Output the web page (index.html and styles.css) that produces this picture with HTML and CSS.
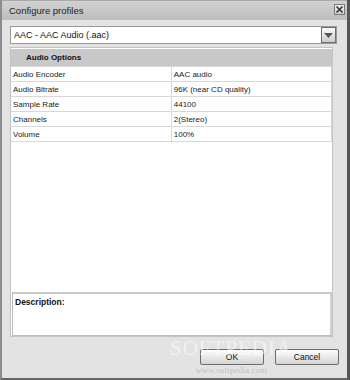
FILE: index.html
```html
<!DOCTYPE html>
<html lang="en">
<head>
  <meta charset="UTF-8">
  <title>Configure profiles</title>
  <link rel="stylesheet" href="styles.css">
</head>
<body>
  <div class="window">
    <div class="titlebar">
      <span class="title">Configure profiles</span>
      <span class="close">
        <svg width="9" height="9" viewBox="0 0 9 9"><path d="M1.5 1.5 L7.5 7.5 M7.5 1.5 L1.5 7.5" stroke="#333" stroke-width="1.6"/></svg>
      </span>
    </div>

    <div class="content">
      <div class="combo">
        <span class="combo-text">AAC - AAC Audio (.aac)</span>
        <span class="combo-btn">
          <svg width="9" height="5" viewBox="0 0 9 5"><path d="M0 0 L9 0 L4.5 5 Z" fill="#555"/></svg>
        </span>
      </div>

      <div class="panel">
        <table class="options">
          <tr class="head"><th colspan="2">Audio Options</th></tr>
          <tr><td>Audio Encoder</td><td>AAC audio</td></tr>
          <tr><td>Audio Bitrate</td><td>96K (near CD quality)</td></tr>
          <tr><td>Sample Rate</td><td>44100</td></tr>
          <tr><td>Channels</td><td>2(Stereo)</td></tr>
          <tr><td>Volume</td><td>100%</td></tr>
        </table>
        <div class="spacer"></div>
        <div class="desc">Description:</div>
      </div>

      <div class="buttons">
        <button class="btn">OK</button>
        <button class="btn">Cancel</button>
      </div>
    </div>

    <div class="watermark">
      <div class="wm-big">SOFTPEDIA</div>
      <div class="wm-small">www.softpedia.com</div>
    </div>
  </div>
</body>
</html>
```

FILE: styles.css
```css
html, body {
  margin: 0;
  padding: 0;
  background: #e3e3e3;
}

body {
  font-family: "Liberation Sans", Arial, sans-serif;
  color: #111;
}

.window {
  position: relative;
  width: 350px;
  height: 380px;
  box-sizing: border-box;
  border-left: 2px solid #8c8c8c;
  border-right: 3px solid #555;
  border-bottom: 2px solid #666;
  background: #e3e3e3;
  display: flex;
  flex-direction: column;
}

.titlebar {
  height: 20px;
  flex: none;
  display: flex;
  align-items: center;
  justify-content: space-between;
  padding: 0 2px 0 7px;
  background: linear-gradient(#d2d2d2, #bdbdbd);
  border-top: 1px solid #aaa;
  box-sizing: border-box;
}

.title {
  font-size: 9.5px;
  color: #222;
}

.close {
  width: 11px;
  height: 11px;
  box-sizing: border-box;
  border: 1px solid #777;
  background: linear-gradient(#f2f2f2, #cfcfcf);
  display: flex;
  align-items: center;
  justify-content: center;
  margin-top: -2px;
}

.content {
  flex: 1;
  display: flex;
  flex-direction: column;
  padding: 6px 10px 0 8px;
}

.combo {
  height: 18px;
  box-sizing: border-box;
  border: 1px solid #9a9a9a;
  background: #fff;
  display: flex;
  align-items: center;
  justify-content: space-between;
  padding-left: 3px;
}

.combo-text {
  font-size: 9px;
}

.combo-btn {
  width: 15px;
  height: 16px;
  box-sizing: border-box;
  border: 1px solid #6e6e6e;
  background: linear-gradient(#fafafa, #cdcdcd);
  display: flex;
  align-items: center;
  justify-content: center;
}

.panel {
  margin-top: 3px;
  margin-right: 4px;
  height: 290px;
  box-sizing: border-box;
  border: 1px solid #c4c4c4;
  background: #fff;
  display: flex;
  flex-direction: column;
}

.options {
  width: 321px;
  border-collapse: collapse;
  margin-top: 1px;
  font-size: 8px;
}

.options th {
  background: #c8c8c8;
  height: 17px;
  text-align: left;
  padding: 0 0 0 15px;
  font-size: 8px;
  font-weight: bold;
  color: #111;
}

.options td {
  height: 14px;
  padding: 0 0 0 2px;
  border: 1px solid #d8d8d8;
  border-left: none;
  width: 50%;
  color: #1a1a1a;
}

.options td + td {
  border-left: 1px solid #d8d8d8;
}

.spacer {
  flex: 1;
}

.desc {
  height: 44px;
  box-sizing: border-box;
  border: 1px solid #bcbcbc;
  border-top: 2px solid #c8c8c8;
  border-right: 2px solid #d0d0d0;
  margin: 0 0 0 1px;
  padding: 3px 2px;
  font-size: 8.5px;
  font-weight: bold;
}

.buttons {
  display: flex;
  justify-content: flex-end;
  gap: 11px;
  margin-top: 12px;
  margin-right: -2px;
}

.btn {
  width: 64px;
  height: 16px;
  padding: 0;
  font-family: "Liberation Sans", Arial, sans-serif;
  font-size: 8.5px;
  color: #111;
  border: 1px solid #6c6c6c;
  border-radius: 2px;
  background: linear-gradient(#fdfdfd, #d4d4d4);
}

.watermark {
  position: absolute;
  left: 168px;
  top: 338px;
  pointer-events: none;
  text-align: center;
}

.wm-big {
  font-family: "Liberation Serif", serif;
  font-size: 21px;
  letter-spacing: 1px;
  color: rgba(255, 255, 255, 0.55);
  line-height: 21px;
}

.wm-small {
  font-family: "Liberation Serif", serif;
  font-size: 9px;
  color: rgba(120, 120, 120, 0.35);
  margin-top: 6px;
}
```
